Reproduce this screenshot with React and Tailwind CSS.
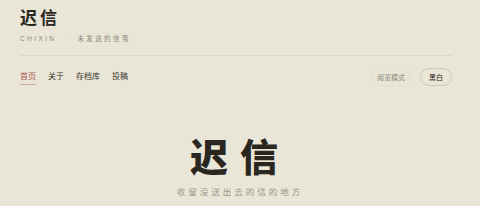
export default function App() {
  const nav = ['首页', '关于', '存档库', '投稿'];
  return (
    <div className="w-[480px] h-[206px] overflow-hidden bg-[#e9e5d7] font-['Noto_Sans_CJK_SC',sans-serif] text-[#2a2620]">
      <header className="pl-5 pr-[28px] pt-[6px]">
        <h1 className="text-[17px] font-bold leading-[22px] tracking-[3px]">迟信</h1>
        <p className="mt-[6px] text-[6.5px] leading-[10px] tracking-[2.4px] text-[#8d887c] font-['Liberation_Sans','Noto_Sans_CJK_SC',sans-serif]">
          CHIXIN <span className="mx-[4px]">·</span> 未发送的信笺
        </p>
        <div className="mt-[11px] h-px bg-[#dcd7c9]" />
      </header>
      <nav className="pl-5 pr-[28px] mt-[12px] flex items-center justify-between">
        <ul className="flex items-center gap-[12px] text-[8px] leading-[12px] text-[#3b362e]">
          {nav.map((n, i) => (
            <li key={n} className={i === 0 ? 'text-[#a5584f] border-b border-[#d8a7a0] pb-[2px]' : 'pb-[3px]'}>
              {n}
            </li>
          ))}
        </ul>
        <div className="flex items-center gap-[10px] text-[7px] leading-[10px]">
          <span className="px-[4px] py-[3px] rounded-[3px] border border-[#e3dfd2] text-[#8d887c]">阅览模式</span>
          <span className="px-[8px] py-[3px] rounded-full border border-[#cfc9ba] text-[#2a2620]">黑白</span>
        </div>
      </nav>
      <main className="flex flex-col items-center mt-[47px]">
        <h2 className="text-[38px] font-black leading-[43px] tracking-[12px]">迟信</h2>
        <p className="mt-[9px] text-[8.5px] leading-[12px] tracking-[3px] text-[#9a9587]">收留没送出去的话的地方</p>
      </main>
    </div>
  );
}
